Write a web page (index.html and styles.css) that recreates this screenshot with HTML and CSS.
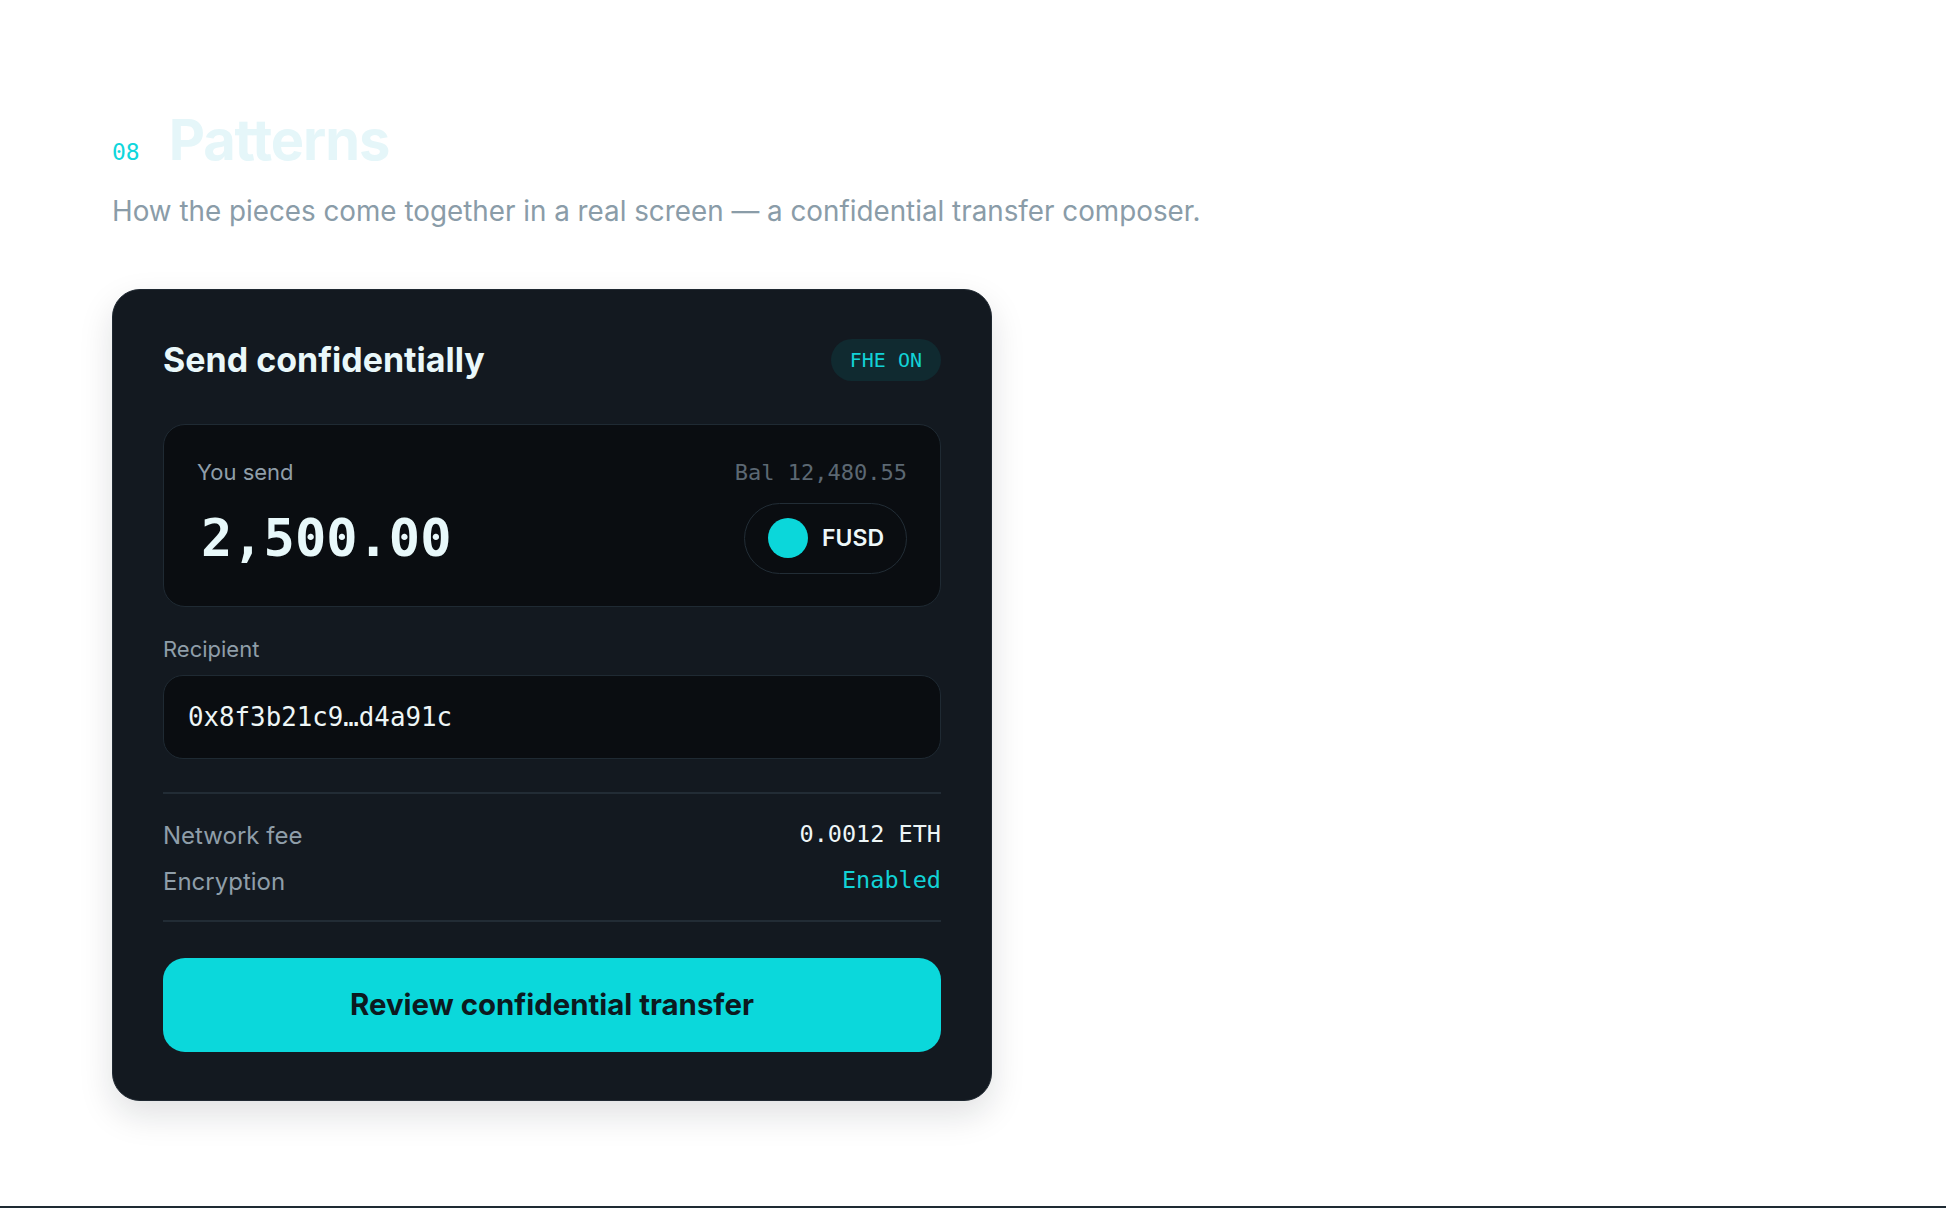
FILE: index.html
```html
<!DOCTYPE html>
<html lang="en">
<head>
<meta charset="utf-8">
<title>Patterns</title>
<link rel="stylesheet" href="styles.css">
</head>
<body>
<section class="section">
  <div class="section-head">
    <span class="section-num">08</span>
    <h2 class="section-title">Patterns</h2>
  </div>
  <p class="section-sub">How the pieces come together in a real screen — a confidential transfer composer.</p>

  <div class="card">
    <div class="card-head">
      <h3 class="card-title">Send confidentially</h3>
      <span class="badge">FHE ON</span>
    </div>

    <div class="send-box">
      <div class="send-top">
        <span class="label">You send</span>
        <span class="balance">Bal 12,480.55</span>
      </div>
      <div class="send-main">
        <span class="amount">2,500.00</span>
        <span class="token"><span class="token-dot"></span><span class="token-name">FUSD</span></span>
      </div>
    </div>

    <div class="field-label">Recipient</div>
    <div class="address">0x8f3b21c9…d4a91c</div>

    <div class="summary">
      <div class="summary-row">
        <span class="summary-key">Network fee</span>
        <span class="summary-val">0.0012 ETH</span>
      </div>
      <div class="summary-row">
        <span class="summary-key">Encryption</span>
        <span class="summary-val accent">Enabled</span>
      </div>
    </div>

    <button class="cta" type="button">Review confidential transfer</button>
  </div>
</section>
</body>
</html>
```

FILE: styles.css
```css
* { box-sizing: border-box; }

html, body {
  margin: 0;
  padding: 0;
  background: #ffffff;
}

body {
  font-family: Inter, "Noto Sans", "Liberation Sans", sans-serif;
}

.section {
  padding: 110px 112px 105px;
  border-bottom: 2px solid #1e2a33;
}

.section-head {
  display: flex;
  align-items: baseline;
  gap: 29px;
}

.section-num {
  font-family: "DejaVu Sans Mono", "Liberation Mono", monospace;
  font-size: 23px;
  color: #10d6dc;
}

.section-title {
  margin: 0;
  font-size: 56px;
  line-height: 1.1;
  font-weight: 700;
  letter-spacing: -0.02em;
  color: #e5f6f9;
}

.section-sub {
  margin: 18px 0 0;
  font-size: 27.8px;
  line-height: 42px;
  color: #8a9ca8;
}

.card {
  margin-top: 57px;
  width: 880px;
  background: #131920;
  border: 1px solid #1f2831;
  border-radius: 28px;
  padding: 49px 50px 48px;
  box-shadow: 0 14px 34px rgba(16, 24, 32, 0.13);
}

.card-head {
  display: flex;
  align-items: center;
  justify-content: space-between;
}

.card-title {
  margin: 0;
  font-size: 34px;
  line-height: 40px;
  font-weight: 700;
  color: #eaf8fa;
}

.badge {
  display: inline-flex;
  align-items: center;
  height: 42px;
  padding: 0 19px;
  border-radius: 21px;
  background: #102a30;
  color: #12d2d6;
  font-family: "DejaVu Sans Mono", "Liberation Mono", monospace;
  font-size: 20px;
}

.send-box {
  margin-top: 43px;
  background: #0a0d11;
  border: 1px solid #1f2a33;
  border-radius: 22px;
  padding: 34px 33px 32px;
}

.send-top {
  display: flex;
  align-items: baseline;
  justify-content: space-between;
  line-height: 27px;
}

.label {
  font-size: 22px;
  color: #8f9ea9;
}

.balance {
  font-family: "DejaVu Sans Mono", "Liberation Mono", monospace;
  font-size: 22px;
  color: #5c6873;
}

.send-main {
  margin-top: 17px;
  display: flex;
  align-items: center;
  justify-content: space-between;
}

.amount {
  font-family: "DejaVu Sans Mono", "Liberation Mono", monospace;
  font-size: 52px;
  line-height: 1;
  font-weight: 700;
  color: #e8f8fa;
  padding-left: 4px;
}

.token {
  display: inline-flex;
  align-items: center;
  gap: 14px;
  height: 71px;
  padding: 0 22px 0 23px;
  border: 1.5px solid #222d36;
  border-radius: 36px;
}

.token-dot {
  width: 40px;
  height: 40px;
  border-radius: 50%;
  background: #0bd7da;
}

.token-name {
  font-size: 23px;
  font-weight: 600;
  color: #eef8f9;
}

.field-label {
  margin-top: 29px;
  font-size: 22px;
  line-height: 27px;
  color: #8f9ea9;
}

.address {
  margin-top: 12px;
  height: 84px;
  display: flex;
  align-items: center;
  padding: 0 24px;
  background: #0a0d11;
  border: 1px solid #1f2a33;
  border-radius: 20px;
  font-family: "DejaVu Sans Mono", "Liberation Mono", monospace;
  font-size: 25.8px;
  color: #eef6f7;
}

.summary {
  margin-top: 33px;
  border-top: 2px solid #222c35;
  border-bottom: 2px solid #222c35;
  padding: 24px 0 20px;
  display: flex;
  flex-direction: column;
  gap: 10px;
}

.summary-row {
  display: flex;
  align-items: center;
  justify-content: space-between;
  height: 36px;
}

.summary-key {
  font-size: 24px;
  color: #8f9ea9;
}

.summary-val {
  font-family: "DejaVu Sans Mono", "Liberation Mono", monospace;
  font-size: 23.5px;
  color: #eef6f7;
  margin-top: -4px;
}

.summary-val.accent {
  color: #12d2d6;
}

.cta {
  display: block;
  width: 100%;
  height: 94px;
  margin-top: 36px;
  border: 0;
  border-radius: 22px;
  background: #0bd8db;
  color: #0c1a20;
  font-family: Inter, "Noto Sans", "Liberation Sans", sans-serif;
  font-size: 29.4px;
  font-weight: 700;
  cursor: pointer;
}
```
